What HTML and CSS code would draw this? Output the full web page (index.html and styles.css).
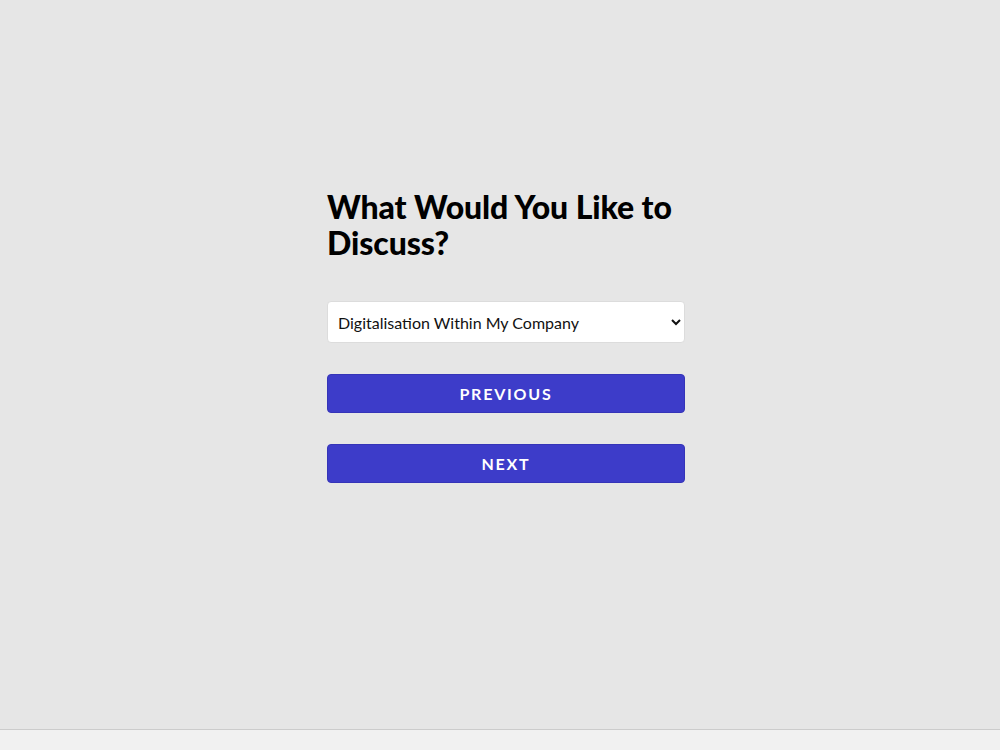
FILE: index.html
```html
<!DOCTYPE html>
<html lang="en">
<head>
  <meta charset="UTF-8" />
  <meta name="viewport" content="width=device-width, initial-scale=1.0"/>
  <title>Book a Call</title>
  <link rel="stylesheet" href="styles.css">
</head>
<body>
<div class="page">
  <form class="step" id="stepForm">
    <h2 class="step-title">What Would You Like to Discuss?</h2>
    <select name="topic" id="topic" class="step-select">
      <option selected>Digitalisation Within My Company</option>
      <option>Software Development</option>
      <option>Cloud Migration</option>
      <option>Something Else</option>
    </select>
    <button type="button" class="step-btn">Previous</button>
    <button type="submit" class="step-btn">Next</button>
  </form>
</div>
<div class="bottom-bar"></div>
</body>
</html>
```

FILE: styles.css
```css
html, body { margin: 0; padding: 0; }
body { font-family: Lato, "Noto Sans", Arial, sans-serif; background-color: #f1f1f1; color: #000; }
.page { height: 730px; box-sizing: border-box; background-color: #e6e6e6; border-bottom: 1px solid #cccccc; display: flex; justify-content: center; padding-top: 189px; padding-left: 12px; }
.step { width: 358px; display: flex; flex-direction: column; }
.step-title { margin: 0 0 40px 0; font-size: 32px; line-height: 36px; font-weight: 900; letter-spacing: -0.1px; }
.step-select { height: 42px; padding: 0 6px 0 6px; font-family: inherit; font-size: 16px; color: #111; background-color: #fff; border: 1px solid #dcdcdc; border-radius: 4px; margin-bottom: 31px; }
.step-btn { height: 39px; background-color: #3d3cc9; color: #fff; border: 1px solid #3534b8; border-radius: 4px; font-family: inherit; font-size: 16px; font-weight: 700; letter-spacing: 1.8px; text-transform: uppercase; margin-bottom: 31px; cursor: pointer; }
.bottom-bar { height: 19px; }
```
